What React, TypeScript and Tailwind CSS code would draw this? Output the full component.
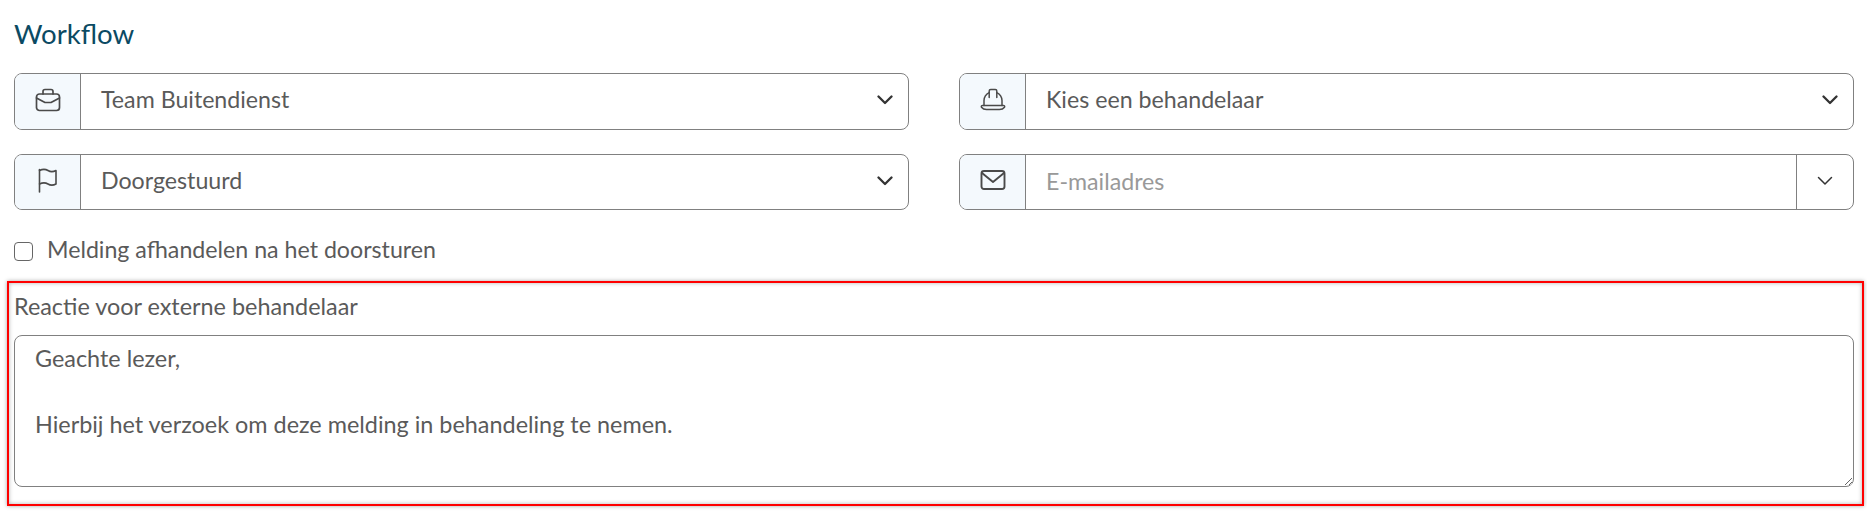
const iconClass = "w-[26px] h-[26px] fill-none stroke-[#4a4a4a]";

function BriefcaseIcon() {
  return (
    <svg viewBox="0 0 26 26" className={iconClass} strokeWidth="1.7" strokeLinecap="round" strokeLinejoin="round">
      <rect x="1.500" y="7" width="23" height="16.500" rx="3" />
      <path d="M8 7V4.500a2 2 0 0 1 2-2h6a2 2 0 0 1 2 2V7" />
      <path d="M1.500 11l8.500 4.500h6l8.500-4.500" />
    </svg>
  );
}

function HardHatIcon() {
  return (
    <svg viewBox="0 0 26 26" className={iconClass} strokeWidth="1.5" strokeLinecap="round" strokeLinejoin="round">
      <path d="M4 18.500V13.500A9 9 0 0 1 9.200 5.600M22 18.500V13.500A9 9 0 0 0 16.800 5.600" />
      <path d="M9.200 10.500V4A1.500 1.500 0 0 1 10.700 2.500h4.600A1.500 1.500 0 0 1 16.800 4v6.500" />
      <path d="M2.500 18.500h21c1 0 1.500 1 1 1.700-1 1.300-3 2.300-5 2.300H6.500c-2 0-4-1-5-2.300-.5-.7 0-1.700 1-1.700z" />
    </svg>
  );
}

function FlagIcon() {
  return (
    <svg viewBox="0 0 26 26" className={iconClass} strokeWidth="1.6" strokeLinecap="round" strokeLinejoin="round">
      <path d="M4.500 25V2.500" />
      <path d="M4.500 3.500c3-1.500 6-1.500 8.500 0s5 1.500 8 0V17c-3 1.500-5.500 1.500-8 0s-5.500-1.500-8.500 0" />
    </svg>
  );
}

function MailIcon() {
  return (
    <svg viewBox="0 0 26 26" className={iconClass} strokeWidth="1.9" strokeLinecap="round" strokeLinejoin="round">
      <rect x="1.500" y="4" width="23" height="18" rx="2.500" />
      <path d="M2 6l11 9 11-9" />
    </svg>
  );
}

function Chevron({ thin }: { thin?: boolean }) {
  return (
    <svg viewBox="0 0 16 10" className="w-[16px] h-[10px] fill-none stroke-[#333]" strokeWidth={thin ? 1.5 : 2.3} strokeLinecap="round" strokeLinejoin="round">
      <path d="M1.500 1.500L8 8l6.500-6.500" />
    </svg>
  );
}

function Field({ icon, label, height, textPad }: { icon: React.ReactNode; label: string; height: string; textPad: string }) {
  return (
    <div className={`flex ${height} border border-[#808080] rounded-[8px] overflow-hidden bg-white`}>
      <div className="w-[66px] shrink-0 bg-[#f4f9fd] border-r border-[#808080] flex items-center justify-center pb-[4px]">
        {icon}
      </div>
      <div className={`flex-1 flex items-center justify-between pl-[20px] pr-[15px] ${textPad}`}>
        <span>{label}</span>
        <Chevron />
      </div>
    </div>
  );
}

export default function App() {
  return (
    <div className="min-h-[513px] bg-white pl-[14px] pr-[13px] text-[23.2px] text-[#5a5a5a] font-['Lato','Liberation_Sans',sans-serif]">
      <h2 className="pt-[16px] text-[27.6px] leading-[36px] text-[#0b4a63]">Workflow</h2>

      <div className="mt-[21px] grid grid-cols-2 gap-x-[50px] gap-y-[24px]">
        <Field icon={<BriefcaseIcon />} label="Team Buitendienst" height="h-[57px]" textPad="pb-[4px]" />
        <Field icon={<HardHatIcon />} label="Kies een behandelaar" height="h-[57px]" textPad="pb-[4px]" />
        <Field icon={<FlagIcon />} label="Doorgestuurd" height="h-[56px]" textPad="pb-[3px]" />
        <div className="flex h-[56px] border border-[#808080] rounded-[8px] overflow-hidden bg-white">
          <div className="w-[66px] shrink-0 bg-[#f4f9fd] border-r border-[#808080] flex items-center justify-center pb-[4px]">
            <MailIcon />
          </div>
          <input
            placeholder="E-mailadres"
            className="flex-1 min-w-0 pl-[20px] pb-[1px] outline-none placeholder:text-[#999999]"
          />
          <div className="w-[57px] shrink-0 border-l border-[#808080] flex items-center justify-center pb-[3px]">
            <Chevron thin />
          </div>
        </div>
      </div>

      <label className="mt-[28px] flex items-center gap-[14px] h-[24px]">
        <span className="w-[19px] h-[19px] mt-[2px] border border-[#666666] rounded-[4px] bg-white" />
        <span className="pb-[2px]">Melding afhandelen na het doorsturen</span>
      </label>

      <div className="mt-[19px] -ml-[7px] -mr-[10px] h-[225px] border-2 border-[#ff0000] pl-[5px] pr-[8px] pt-[9px] text-[23.4px] shadow-[0_0_4px_rgba(0,0,0,0.35),inset_0_0_4px_rgba(0,0,0,0.3)]">
        <div className="leading-[28px]">Reactie voor externe behandelaar</div>
        <textarea
          readOnly
          defaultValue={"Geachte lezer,\n\nHierbij het verzoek om deze melding in behandeling te nemen."}
          className="mt-[15px] block w-full h-[152px] border border-[#808080] rounded-[8px] pl-[20px] pr-[20px] pt-[6px] leading-[33px] outline-none bg-white"
        />
      </div>
    </div>
  );
}
